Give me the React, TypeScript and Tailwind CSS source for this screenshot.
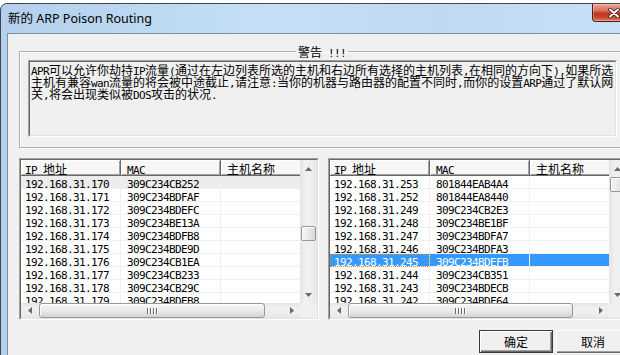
import React from "react";

const MONO = "font-['DejaVu_Sans_Mono',monospace] text-[11px] tracking-[-0.62px]";
const CJK = "font-['Noto_Sans_CJK_SC',sans-serif] text-[12px]";

function T({ s }: { s: string }) {
  const parts = s.match(/[\x00-\x7f]+|[^\x00-\x7f]+/g) || [];
  return (
    <>
      {parts.map((p, i) =>
        /^[\x00-\x7f]/.test(p) ? (
          <span key={i} className={MONO}>
            {p}
          </span>
        ) : (
          <span key={i} className={CJK}>
            {p}
          </span>
        )
      )}
    </>
  );
}

type Row = { ip: string; mac: string; sel?: "gray" | "blue" };

const leftRows: Row[] = [
  { ip: "192.168.31.170", mac: "309C234CB252", sel: "gray" },
  { ip: "192.168.31.171", mac: "309C234BDFAF" },
  { ip: "192.168.31.172", mac: "309C234BDEFC" },
  { ip: "192.168.31.173", mac: "309C234BE13A" },
  { ip: "192.168.31.174", mac: "309C234BDFB8" },
  { ip: "192.168.31.175", mac: "309C234BDE9D" },
  { ip: "192.168.31.176", mac: "309C234CB1EA" },
  { ip: "192.168.31.177", mac: "309C234CB233" },
  { ip: "192.168.31.178", mac: "309C234CB29C" },
  { ip: "192.168.31.179", mac: "309C234BDEB8" },
];

const rightRows: Row[] = [
  { ip: "192.168.31.253", mac: "801844EAB4A4" },
  { ip: "192.168.31.252", mac: "801844EA8440" },
  { ip: "192.168.31.249", mac: "309C234CB2E3" },
  { ip: "192.168.31.248", mac: "309C234BE1BF" },
  { ip: "192.168.31.247", mac: "309C234BDFA7" },
  { ip: "192.168.31.246", mac: "309C234BDFA3" },
  { ip: "192.168.31.245", mac: "309C234BDEFB", sel: "blue" },
  { ip: "192.168.31.244", mac: "309C234CB351" },
  { ip: "192.168.31.243", mac: "309C234BDECB" },
  { ip: "192.168.31.242", mac: "309C234BDF64" },
];

function Arrow({ dir }: { dir: "up" | "down" | "left" | "right" }) {
  const pts =
    dir === "up"
      ? "0,4 3.5,0 7,4"
      : dir === "down"
      ? "0,0 3.5,4 7,0"
      : dir === "left"
      ? "4,0 0,3.5 4,7"
      : "0,0 4,3.5 0,7";
  const w = dir === "up" || dir === "down" ? 7 : 4;
  const h = dir === "up" || dir === "down" ? 4 : 7;
  return (
    <svg width={w} height={h} viewBox={`0 0 ${w} ${h}`}>
      <polygon points={pts} fill="#6a6a6a" />
    </svg>
  );
}

function HeaderCell({ children, first }: { children: React.ReactNode; first?: boolean }) {
  return (
    <div
      className={`w-[100px] shrink-0 h-[16px] leading-[12px] pt-[2px] whitespace-pre bg-[#f7f7f7] border-r border-b border-[#696969] shadow-[inset_1px_1px_0_#ffffff,inset_-1px_-1px_0_#a0a0a0] ${
        first ? "pl-[4px]" : "pl-[6px]"
      }`}
    >
      {children}
    </div>
  );
}

function ListView({
  rows,
  vThumbMt,
  hThumbW,
}: {
  rows: Row[];
  vThumbMt: string;
  hThumbW: string;
}) {
  return (
    <div className="w-[300px] h-[162px] border border-t-[#a0a0a0] border-l-[#a0a0a0] border-r-white border-b-white">
      <div className="h-full border border-t-[#696969] border-l-[#696969] border-r-[#e3e3e3] border-b-[#e3e3e3] bg-white flex flex-col">
        <div className="h-[143px] flex">
          <div className="flex-1 overflow-hidden">
            <div className="flex">
              <HeaderCell first>
                <T s="IP 地址" />
              </HeaderCell>
              <HeaderCell>
                <T s="MAC" />
              </HeaderCell>
              <HeaderCell>
                <T s="主机名称" />
              </HeaderCell>
            </div>
            {rows.map((r) => {
              const blue = r.sel === "blue";
              const gray = r.sel === "gray";
              const bg = blue ? "bg-[#3399ff] text-white" : gray ? "bg-[#ececec] text-black" : "bg-white text-black";
              return (
                <div key={r.ip} className={`flex h-[13px] ${bg}`}>
                  <div
                    className={`w-[100px] shrink-0 h-[13px] pl-[4px] leading-[12px] border-r border-b border-[#f0f0f0] whitespace-pre ${
                      blue ? "outline outline-1 outline-dotted outline-[#d8862a] -outline-offset-1" : ""
                    }`}
                  >
                    <T s={r.ip} />
                  </div>
                  <div className="w-[100px] shrink-0 h-[13px] pl-[6px] leading-[12px] border-r border-b border-[#f0f0f0] whitespace-pre">
                    <T s={r.mac} />
                  </div>
                  <div className="w-[100px] shrink-0 h-[13px] border-r border-b border-[#f0f0f0]" />
                </div>
              );
            })}
          </div>
          <div className="w-[17px] shrink-0 flex flex-col bg-[linear-gradient(90deg,#e3e3e3_0%,#f0f0f0_30%,#eeeeee_70%,#e6e6e6_100%)]">
            <div className="h-[17px] flex items-center justify-center">
              <Arrow dir="up" />
            </div>
            <div className="flex-1 flex flex-col items-center">
              <div
                className={`${vThumbMt} w-[15px] h-[15px] rounded-[2px] border border-[#979797] bg-[linear-gradient(90deg,#f6f6f6_0%,#eaeaea_50%,#d6d6d6_100%)] shadow-[inset_1px_1px_0_#ffffff]`}
              />
            </div>
            <div className="h-[17px] flex items-center justify-center">
              <Arrow dir="down" />
            </div>
          </div>
        </div>
        <div className="flex-1 flex">
          <div className="flex-1 flex items-center bg-[linear-gradient(180deg,#e3e3e3_0%,#f0f0f0_30%,#eeeeee_70%,#e6e6e6_100%)]">
            <div className="w-[17px] h-full flex items-center justify-center">
              <Arrow dir="left" />
            </div>
            <div
              className={`ml-[1px] ${hThumbW} h-[15px] rounded-[3px] border border-[#979797] bg-[linear-gradient(180deg,#f6f6f6_0%,#eaeaea_50%,#d4d4d4_100%)] shadow-[inset_1px_1px_0_#ffffff] flex items-center justify-center gap-[1px]`}
            >
              {[0, 1, 2, 3].map((i) => (
                <div key={i} className="w-[1px] h-[6px] bg-[#6a6a6a] shadow-[1px_0_0_#ffffff] mr-[1px]" />
              ))}
            </div>
            <div className="flex-1" />
            <div className="w-[17px] h-full flex items-center justify-center">
              <Arrow dir="right" />
            </div>
          </div>
          <div className="w-[17px] bg-[#f0f0f0]" />
        </div>
      </div>
    </div>
  );
}

export default function App() {
  return (
    <div className="w-[620px] h-[355px] overflow-hidden bg-white">
      <div className="mt-[3px] w-[644px] h-[420px] rounded-t-[7px] border border-[#3e4650] bg-[linear-gradient(90deg,#b5d0ec_0%,#bad6f1_18%,#c5dff7_42%,#bfd9f3_68%,#c9e1f7_100%)] flex flex-col">
        <div className="h-[29px] shrink-0 flex items-start">
          <div className="pl-[7px] pt-[6px] text-[12.5px] leading-[18px] text-black whitespace-nowrap font-['Noto_Sans','Noto_Sans_CJK_SC',sans-serif]">
            新的 ARP Poison Routing
          </div>
          <div className="ml-auto mr-[8px] w-[43px] h-[18px] rounded-b-[4px] border border-t-0 border-[#4e1f18] bg-[linear-gradient(180deg,#e9a493_0%,#d8705a_40%,#c0341c_55%,#c84a30_80%,#d9826c_100%)] shadow-[inset_0_0_0_1px_rgba(255,255,255,0.3)] flex items-center justify-center">
            <svg width="12" height="10" viewBox="0 0 12 10">
              <path d="M2 1.5 L10 8.5 M10 1.5 L2 8.5" stroke="#3b1610" strokeWidth="3.6" strokeLinecap="round" />
              <path d="M2 1.5 L10 8.5 M10 1.5 L2 8.5" stroke="#ffffff" strokeWidth="2" strokeLinecap="round" />
            </svg>
          </div>
        </div>
        <div className="ml-[6px] flex-1 border-l border-t border-[#7d8ea3] bg-[#f0f0f0] pl-[11px] pt-[10px] flex flex-col">
          <fieldset className="w-[606px] min-w-0 border border-[#b0b0b0] shadow-[1px_1px_0_#ffffff,inset_1px_1px_0_#ffffff] px-[8px] pb-[10px]">
            <legend align="center" className="mx-auto px-[2px] h-[14px] leading-[14px] whitespace-pre text-black">
              <T s="警告 !!!" />
            </legend>
            <div className="mt-[2px] w-[589px] h-[77px] border border-t-[#a0a0a0] border-l-[#a0a0a0] border-r-white border-b-white">
              <div className="h-full border border-t-[#696969] border-l-[#696969] border-r-[#e3e3e3] border-b-[#e3e3e3] bg-[#f0f0f0] pl-[1px] pt-[1px] text-black">
                <div className="h-[12px] leading-[12px] whitespace-pre">
                  <T s="APR可以允许你劫持IP流量(通过在左边列表所选的主机和右边所有选择的主机列表,在相同的方向下),如果所选" />
                </div>
                <div className="h-[12px] leading-[12px] whitespace-pre">
                  <T s="主机有兼容wan流量的将会被中途截止,请注意:当你的机器与路由器的配置不同时,而你的设置ARP通过了默认网" />
                </div>
                <div className="h-[12px] leading-[12px] whitespace-pre">
                  <T s="关,将会出现类似被DOS攻击的状况." />
                </div>
              </div>
            </div>
          </fieldset>
          <div className="mt-[10px] flex gap-[9px]">
            <ListView rows={leftRows} vThumbMt="mt-[49px]" hThumbW="w-[226px]" />
            <ListView rows={rightRows} vThumbMt="mt-[0px]" hThumbW="w-[225px]" />
          </div>
          <div className="mt-[10px] w-[611px] flex justify-end gap-[3px]">
            <div className="w-[74px] h-[23px] border border-[#3a3a3a] bg-[#f0f0f0]">
              <div className="h-full flex items-center justify-center shadow-[inset_1px_1px_0_#ffffff,inset_-1px_-1px_0_#696969,inset_-2px_-2px_0_#a0a0a0] text-black">
                <T s="确定" />
              </div>
            </div>
            <div className="w-[74px] h-[23px] bg-[#f0f0f0] shadow-[inset_1px_1px_0_#ffffff,inset_-1px_-1px_0_#696969,inset_-2px_-2px_0_#a0a0a0] flex items-center justify-center text-black">
              <T s="取消" />
            </div>
          </div>
        </div>
      </div>
    </div>
  );
}
